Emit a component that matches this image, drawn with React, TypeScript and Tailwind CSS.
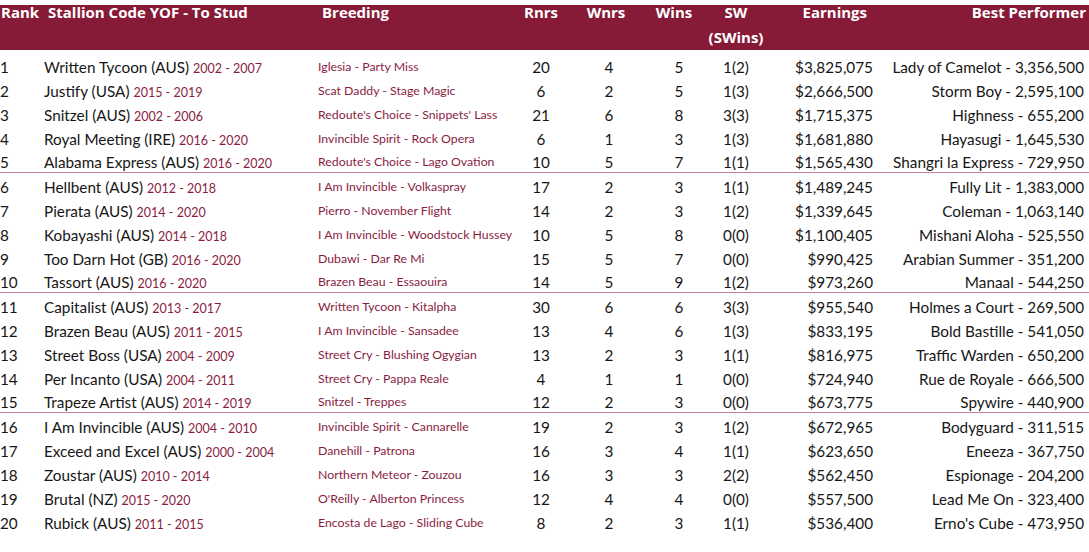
import React from "react";

type Row = {
  rank: number;
  name: string;
  years: string;
  breeding: string;
  rnrs: string;
  wnrs: string;
  wins: string;
  sw: string;
  earnings: string;
  best: string;
};

const rows: Row[] = [
  { rank: 1, name: "Written Tycoon (AUS)", years: "2002 - 2007", breeding: "Iglesia - Party Miss", rnrs: "20", wnrs: "4", wins: "5", sw: "1(2)", earnings: "$3,825,075", best: "Lady of Camelot - 3,356,500" },
  { rank: 2, name: "Justify (USA)", years: "2015 - 2019", breeding: "Scat Daddy - Stage Magic", rnrs: "6", wnrs: "2", wins: "5", sw: "1(3)", earnings: "$2,666,500", best: "Storm Boy - 2,595,100" },
  { rank: 3, name: "Snitzel (AUS)", years: "2002 - 2006", breeding: "Redoute's Choice - Snippets' Lass", rnrs: "21", wnrs: "6", wins: "8", sw: "3(3)", earnings: "$1,715,375", best: "Highness - 655,200" },
  { rank: 4, name: "Royal Meeting (IRE)", years: "2016 - 2020", breeding: "Invincible Spirit - Rock Opera", rnrs: "6", wnrs: "1", wins: "3", sw: "1(3)", earnings: "$1,681,880", best: "Hayasugi - 1,645,530" },
  { rank: 5, name: "Alabama Express (AUS)", years: "2016 - 2020", breeding: "Redoute's Choice - Lago Ovation", rnrs: "10", wnrs: "5", wins: "7", sw: "1(1)", earnings: "$1,565,430", best: "Shangri la Express - 729,950" },
  { rank: 6, name: "Hellbent (AUS)", years: "2012 - 2018", breeding: "I Am Invincible - Volkaspray", rnrs: "17", wnrs: "2", wins: "3", sw: "1(1)", earnings: "$1,489,245", best: "Fully Lit - 1,383,000" },
  { rank: 7, name: "Pierata (AUS)", years: "2014 - 2020", breeding: "Pierro - November Flight", rnrs: "14", wnrs: "2", wins: "3", sw: "1(2)", earnings: "$1,339,645", best: "Coleman - 1,063,140" },
  { rank: 8, name: "Kobayashi (AUS)", years: "2014 - 2018", breeding: "I Am Invincible - Woodstock Hussey", rnrs: "10", wnrs: "5", wins: "8", sw: "0(0)", earnings: "$1,100,405", best: "Mishani Aloha - 525,550" },
  { rank: 9, name: "Too Darn Hot (GB)", years: "2016 - 2020", breeding: "Dubawi - Dar Re Mi", rnrs: "15", wnrs: "5", wins: "7", sw: "0(0)", earnings: "$990,425", best: "Arabian Summer - 351,200" },
  { rank: 10, name: "Tassort (AUS)", years: "2016 - 2020", breeding: "Brazen Beau - Essaouira", rnrs: "14", wnrs: "5", wins: "9", sw: "1(2)", earnings: "$973,260", best: "Manaal - 544,250" },
  { rank: 11, name: "Capitalist (AUS)", years: "2013 - 2017", breeding: "Written Tycoon - Kitalpha", rnrs: "30", wnrs: "6", wins: "6", sw: "3(3)", earnings: "$955,540", best: "Holmes a Court - 269,500" },
  { rank: 12, name: "Brazen Beau (AUS)", years: "2011 - 2015", breeding: "I Am Invincible - Sansadee", rnrs: "13", wnrs: "4", wins: "6", sw: "1(3)", earnings: "$833,195", best: "Bold Bastille - 541,050" },
  { rank: 13, name: "Street Boss (USA)", years: "2004 - 2009", breeding: "Street Cry - Blushing Ogygian", rnrs: "13", wnrs: "2", wins: "3", sw: "1(1)", earnings: "$816,975", best: "Traffic Warden - 650,200" },
  { rank: 14, name: "Per Incanto (USA)", years: "2004 - 2011", breeding: "Street Cry - Pappa Reale", rnrs: "4", wnrs: "1", wins: "1", sw: "0(0)", earnings: "$724,940", best: "Rue de Royale - 666,500" },
  { rank: 15, name: "Trapeze Artist (AUS)", years: "2014 - 2019", breeding: "Snitzel - Treppes", rnrs: "12", wnrs: "2", wins: "3", sw: "0(0)", earnings: "$673,775", best: "Spywire - 440,900" },
  { rank: 16, name: "I Am Invincible (AUS)", years: "2004 - 2010", breeding: "Invincible Spirit - Cannarelle", rnrs: "19", wnrs: "2", wins: "3", sw: "1(2)", earnings: "$672,965", best: "Bodyguard - 311,515" },
  { rank: 17, name: "Exceed and Excel (AUS)", years: "2000 - 2004", breeding: "Danehill - Patrona", rnrs: "16", wnrs: "3", wins: "4", sw: "1(1)", earnings: "$623,650", best: "Eneeza - 367,750" },
  { rank: 18, name: "Zoustar (AUS)", years: "2010 - 2014", breeding: "Northern Meteor - Zouzou", rnrs: "16", wnrs: "3", wins: "3", sw: "2(2)", earnings: "$562,450", best: "Espionage - 204,200" },
  { rank: 19, name: "Brutal (NZ)", years: "2015 - 2020", breeding: "O'Reilly - Alberton Princess", rnrs: "12", wnrs: "4", wins: "4", sw: "0(0)", earnings: "$557,500", best: "Lead Me On - 323,400" },
  { rank: 20, name: "Rubick (AUS)", years: "2011 - 2015", breeding: "Encosta de Lago - Sliding Cube", rnrs: "8", wnrs: "2", wins: "3", sw: "1(1)", earnings: "$536,400", best: "Erno's Cube - 473,950" },
];

export default function App() {
  return (
    <div
      className="w-[1089px] h-[552px] bg-white pt-[5px] overflow-hidden text-[#161616]"
      style={{ fontFamily: "Lato, 'Open Sans', sans-serif" }}
    >
      <div
        className="h-[45px] bg-[#861a37] flex text-white font-bold text-[15px] leading-[14px] whitespace-nowrap"
        style={{ fontFamily: "'Open Sans', Lato, sans-serif" }}
      >
        <div className="w-[44px] pl-[1px]">Rank</div>
        <div className="w-[274px] pl-[4px]">Stallion Code YOF - To Stud</div>
        <div className="w-[192px] pl-[4px]">Breeding</div>
        <div className="w-[62px] text-center">Rnrs</div>
        <div className="w-[74px] text-center pr-[6px]">Wnrs</div>
        <div className="w-[66px] text-center pr-[10px]">Wins</div>
        <div className="w-[48px] flex flex-col items-center">
          <span>SW</span>
          <span className="mt-[11px]">(SWins)</span>
        </div>
        <div className="w-[113px] text-right pr-[6px]">Earnings</div>
        <div className="w-[211px] flex justify-end">
          <span className="-mr-[2px]">Best Performer</span>
        </div>
      </div>
      <div className="pt-[5px]">
        {rows.map((r) => {
          const sep = r.rank % 5 === 0 && r.rank < 20;
          return (
            <div
              key={r.rank}
              className={
                "flex items-center text-[15.3px] whitespace-nowrap " +
                (sep ? "h-[22px] pt-[2px] mb-[2px] border-b border-[#c98394]" : "h-[24px]")
              }
            >
              <div className="w-[44px]">{r.rank}</div>
              <div className="w-[274px]">
                {r.name} <span className="text-[12.5px] text-[#8a1d3f]">{r.years}</span>
              </div>
              <div className="w-[192px] text-[12.3px] text-[#8a1d3f]">{r.breeding}</div>
              <div className="w-[62px] text-center">{r.rnrs}</div>
              <div className="w-[74px] text-center">{r.wnrs}</div>
              <div className="w-[66px] text-center">{r.wins}</div>
              <div className="w-[48px] text-center">{r.sw}</div>
              <div className="w-[113px] text-right">{r.earnings}</div>
              <div className="w-[211px] text-right">{r.best}</div>
            </div>
          );
        })}
      </div>
    </div>
  );
}
